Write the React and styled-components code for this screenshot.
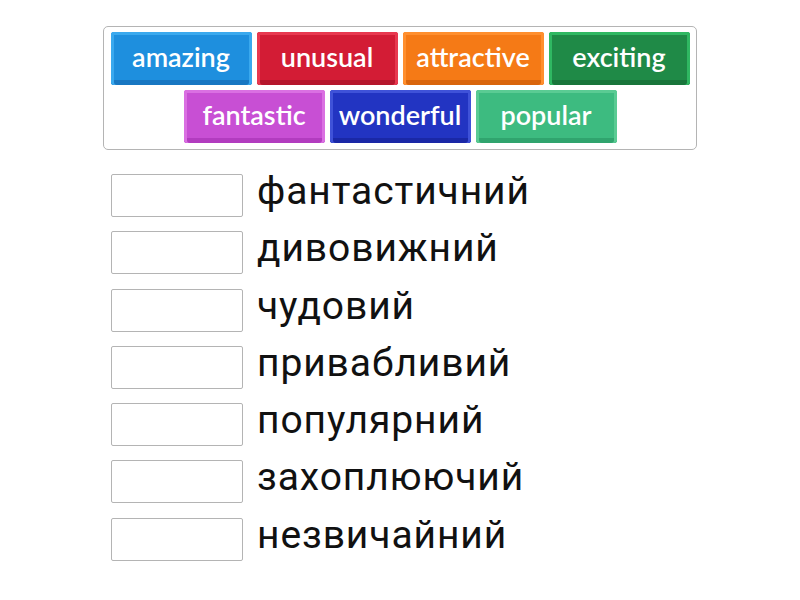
import React from 'react'
import styled, { createGlobalStyle } from 'styled-components'

const GlobalStyle = createGlobalStyle`
  body {
    margin: 0;
    background: #fff;
    font-family: Roboto, "Noto Sans", sans-serif;
  }
`

const tiles = [
  { word: 'amazing', light: '#3aa9ee', base: '#1e8fde', dark: '#1877c2' },
  { word: 'unusual', light: '#e8384f', base: '#d31c35', dark: '#b5162c' },
  { word: 'attractive', light: '#ff8f2e', base: '#f57a16', dark: '#d9650c' },
  { word: 'exciting', light: '#2fb862', base: '#1f8a47', dark: '#19753b' },
  { word: 'fantastic', light: '#da70e2', base: '#c84fd4', dark: '#b23cbf' },
  { word: 'wonderful', light: '#3f52d8', base: '#2234c2', dark: '#1a28a6' },
  { word: 'popular', light: '#5acb93', base: '#3dbb80', dark: '#30a46e' },
]

const rows = [
  'фантастичний',
  'дивовижний',
  'чудовий',
  'привабливий',
  'популярний',
  'захоплюючий',
  'незвичайний',
]

function App() {
  return (
    <Page>
      <GlobalStyle />
      <TileBox>
        {tiles.map((t) => (
          <Tile key={t.word} $light={t.light} $base={t.base} $dark={t.dark}>
            {t.word}
          </Tile>
        ))}
      </TileBox>
      <List>
        {rows.map((r) => (
          <Row key={r}>
            <Slot />
            <Label>{r}</Label>
          </Row>
        ))}
      </List>
    </Page>
  )
}

export default App

const Page = styled.div`
  width: 800px;
  height: 600px;
  padding-top: 26px;
  box-sizing: border-box;
`

const TileBox = styled.div`
  width: 594px;
  margin: 0 auto;
  box-sizing: border-box;
  border: 1px solid #b4b4b4;
  border-radius: 5px;
  padding: 5px 6px 6px;
  display: flex;
  flex-wrap: wrap;
  justify-content: center;
  gap: 5px;
`

const Tile = styled.div`
  width: 141px;
  height: 53px;
  box-sizing: border-box;
  border-radius: 3px;
  background: ${(p) => p.$base};
  box-shadow: inset 0 3px 0 ${(p) => p.$light}, inset 3px 0 0 ${(p) => p.$light},
    inset -3px 0 0 ${(p) => p.$light}, inset 0 -5px 0 ${(p) => p.$dark};
  color: #fff;
  font-family: Lato, "Open Sans", sans-serif;
  font-weight: 600;
  font-size: 27px;
  display: flex;
  align-items: center;
  justify-content: center;
  padding-bottom: 4px;
`

const List = styled.div`
  margin: 24px 0 0 111px;
  display: flex;
  flex-direction: column;
  gap: 14.3px;
`

const Row = styled.div`
  display: flex;
  align-items: center;
  gap: 14px;
`

const Slot = styled.div`
  width: 132px;
  height: 43px;
  box-sizing: border-box;
  border: 1px solid #b4b4b4;
  border-radius: 2px;
  flex-shrink: 0;
`

const Label = styled.div`
  font-family: Roboto, "Noto Sans", sans-serif;
  font-size: 39px;
  letter-spacing: 0.9px;
  color: #111;
  line-height: 35px;
  padding-bottom: 8px;
`
